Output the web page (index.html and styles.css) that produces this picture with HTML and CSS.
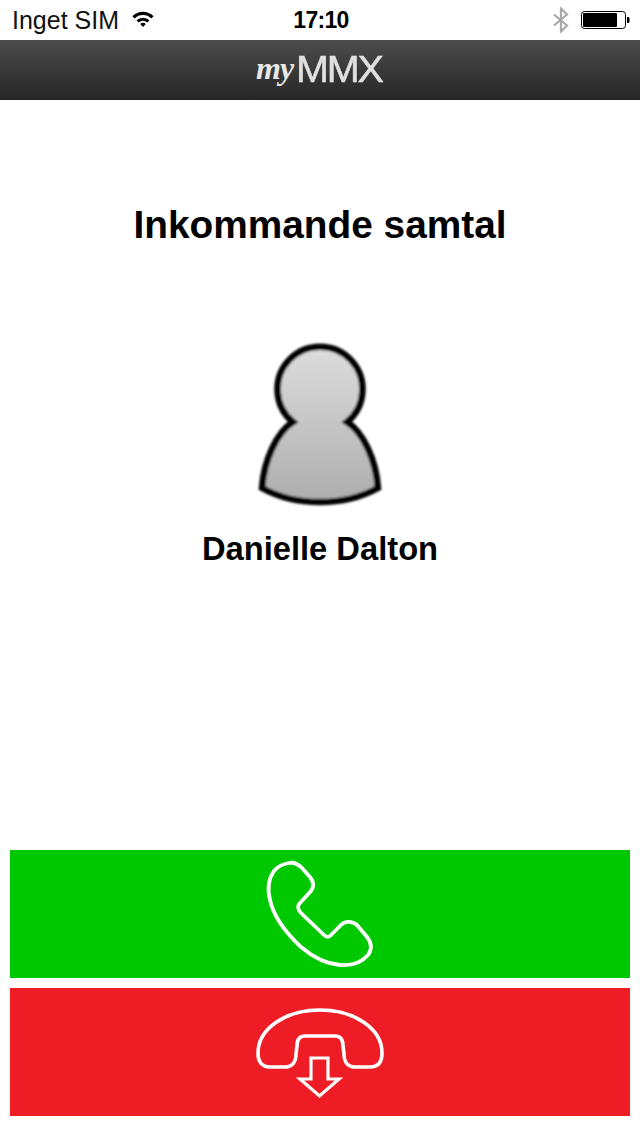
FILE: index.html
```html
<!DOCTYPE html>
<html lang="en">
<head>
  <meta charset="UTF-8">
  <title>myMMX - Inkommande samtal</title>
  <link rel="stylesheet" href="styles.css">
</head>
<body>

<div class="page">

  <div class="status-bar">
    <div class="status-left">
      <span>Inget SIM</span>
      <svg class="wifi" width="24" height="19" viewBox="0 0 26 20">
        <path d="M1.5 7.5 A16 16 0 0 1 24.5 7.5 L22 10 A12.6 12.6 0 0 0 4 10 Z" fill="#000"/>
        <path d="M6 12 A10 10 0 0 1 20 12 L17.6 14.4 A6.6 6.6 0 0 0 8.4 14.4 Z" fill="#000"/>
        <path d="M10 16 A4.4 4.4 0 0 1 16 16 L13 19.2 Z" fill="#000"/>
      </svg>
    </div>
    <div class="status-time">17:10</div>
    <div class="status-right">
      <svg class="bluetooth" width="18" height="26" viewBox="0 0 18 26">
        <path d="M2 7.5 L15 18.5 L9 24.5 V1.5 L15 7.5 L2 18.5" fill="none" stroke="#a8a8a8" stroke-width="2.2"/>
      </svg>
      <svg class="battery" width="50" height="20" viewBox="0 0 50 20">
        <rect x="1.5" y="1.5" width="44" height="17" rx="3" fill="#fff" stroke="#000" stroke-width="1"/>
        <rect x="3" y="3" width="34" height="14" rx="1" fill="#000"/>
        <path d="M47 7 H48 A1.5 1.5 0 0 1 49.5 8.5 V11.5 A1.5 1.5 0 0 1 48 13 H47 Z" fill="#000"/>
      </svg>
    </div>
  </div>

  <div class="header">
    <div class="logo"><span class="logo-my">my</span><span class="logo-mmx">MMX</span></div>
  </div>

  <div class="content">
    <h1 class="title">Inkommande samtal</h1>

    <svg class="avatar" width="130" height="170" viewBox="0 0 130 170">
      <defs>
        <linearGradient id="avatarFill" x1="0" y1="0" x2="0" y2="1">
          <stop offset="0" stop-color="#dddddd"/>
          <stop offset="1" stop-color="#adadad"/>
        </linearGradient>
        <filter id="soften" x="-5%" y="-5%" width="110%" height="110%">
          <feGaussianBlur stdDeviation="1"/>
        </filter>
      </defs>
      <path d="M38 82 A42.5 42.5 0 1 1 92 82 C108 92 121 120 123 148 C105 158 85 162 65 162 C45 162 25 158 7 148 C9 120 22 92 38 82 Z"
            fill="url(#avatarFill)" stroke="#000" stroke-width="6.5" stroke-linejoin="miter" filter="url(#soften)"/>
    </svg>

    <div class="name">Danielle Dalton</div>
  </div>

  <div class="actions">
    <div class="action answer">
      <svg width="120" height="116" viewBox="0 0 120 116">
        <path d="M29 7 C34 6 38 8 42 12 L50 21 C54 26 54 31 51 35 L40 47 C37 50 38 54 41 57 L64 79 C67 82 70 81 72 78 L79 71 C84 65 91 64 97 69 L107 81 C112 87 112 94 108 99 C102 106 92 110 80 109 C66 108 54 102 41 91 C26 77 14 62 10 44 C7 32 9 22 14 15 C18 10 23 8 29 7 Z"
              fill="none" stroke="#fff" stroke-width="3.8" stroke-linejoin="round"/>
      </svg>
    </div>
    <div class="action decline">
      <svg width="140" height="96" viewBox="0 0 140 96">
        <path d="M70 6 C105 6 132 25 132 49 C132 58 128 63 120 63 H105 C98 63 94 58 94 50 L93 42 C93 35 90 32 85 32 H55 C50 32 47 35 47 42 L46 50 C46 58 42 63 35 63 H20 C12 63 8 58 8 49 C8 25 35 6 70 6 Z"
              fill="none" stroke="#fff" stroke-width="3.6" stroke-linejoin="round"/>
        <path d="M61 54 H78 V75 H89 L69.5 92 L50 75 H61 Z" fill="none" stroke="#fff" stroke-width="3.2"/>
      </svg>
    </div>
  </div>

</div>

</body>
</html>
```

FILE: styles.css
```css
body {
  margin: 0;
  font-family: "Liberation Sans", Arial, sans-serif;
  background-color: #fff;
  color: #000;
}
.page {
  display: flex;
  flex-direction: column;
  height: 1136px;
}

/* status bar */
.status-bar {
  display: grid;
  grid-template-columns: 1fr auto 1fr;
  align-items: center;
  height: 40px;
  padding: 0 10px 0 12px;
  font-size: 25px;
}
.status-left {
  display: flex;
  align-items: center;
  gap: 12px;
  color: #111;
}
.wifi {
  margin-top: -3px;
}
.status-time {
  font-weight: bold;
  font-size: 23px;
  letter-spacing: -0.7px;
}
.status-right {
  display: flex;
  align-items: center;
  justify-content: flex-end;
  gap: 10px;
}

/* header */
.header {
  display: flex;
  align-items: center;
  justify-content: center;
  height: 60px;
  background: linear-gradient(#4c4c4c, #262626);
}
.logo {
  display: flex;
  align-items: baseline;
  color: #e8e8e8;
}
.logo-my {
  width: 40px;
  font-family: "Liberation Serif", serif;
  font-weight: bold;
  font-style: italic;
  font-size: 32px;
  letter-spacing: -1px;
  transform: translateY(-3px);
}
.logo-mmx {
  width: 88px;
  font-size: 36px;
  letter-spacing: -2px;
  color: #e0e0e0;
  -webkit-text-stroke: 0.5px #e0e0e0;
  transform: scaleX(1.1);
  transform-origin: left;
}

/* main */
.content {
  flex: 1;
  display: flex;
  flex-direction: column;
  align-items: center;
}
.title {
  margin: 103px 0 0;
  font-size: 38.8px;
  line-height: 44px;
  font-weight: bold;
}
.avatar {
  margin-top: 93px;
}
.name {
  margin-top: 20px;
  font-size: 32.7px;
  line-height: 38px;
  font-weight: bold;
}

/* buttons */
.actions {
  display: flex;
  flex-direction: column;
  gap: 10px;
  padding: 0 10px 20px;
}
.action {
  display: flex;
  align-items: center;
  justify-content: center;
  height: 128px;
}
.answer {
  background-color: #00c800;
}
.decline {
  background-color: #ee1c25;
}
```
